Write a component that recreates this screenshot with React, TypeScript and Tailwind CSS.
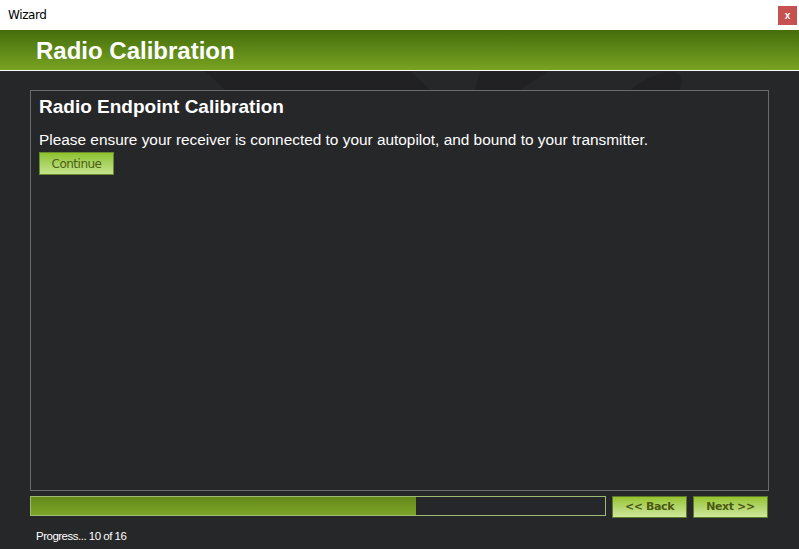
export default function App() {
  const done = 10;
  const total = 16;
  return (
    <div className="w-[799px] h-[549px] flex flex-col bg-[#262729] overflow-hidden font-['Liberation_Sans',Arial,sans-serif]">
      {/* Window title bar */}
      <div className="h-[30px] bg-white flex items-center justify-between pl-[8px] pr-[2px]">
        <span className="text-[12px] text-black font-['DejaVu_Sans',sans-serif] tracking-[-0.4px]">Wizard</span>
        <button className="w-[19px] h-[19px] mt-[1px] bg-[#c75050] text-white text-[10px] font-bold flex items-center justify-center">
          x
        </button>
      </div>

      {/* Green header */}
      <div className="h-[41px] bg-gradient-to-b from-[#456e0b] to-[#78a322] flex items-center pl-[36px] border-b border-white">
        <h1 className="text-[24px] font-bold text-white leading-none mt-[2px]">Radio Calibration</h1>
      </div>

      {/* Body */}
      <div className="relative flex-1 flex flex-col px-[30px] pt-[19px]">
        {/* faint watermark */}
        <svg className="absolute left-0 top-0" width="799" height="60" viewBox="0 0 799 60">
          <polygon points="205,0 410,0 430,19 225,19" fill="#202122" opacity="0.8" />
          <polygon points="480,0 548,0 520,19 475,19" fill="#202122" opacity="0.8" />
          <path d="M630 19 C 660 -5, 690 -5, 680 19 Z" fill="#202122" opacity="0.8" />
        </svg>

        <div className="relative h-[401px] border border-[#6b6b6b] pl-[8px] pt-[5px]">
          <h2 className="text-[19px] font-bold text-white leading-[22px]">Radio Endpoint Calibration</h2>
          <p className="mt-[13px] text-[15.4px] text-white leading-[18px]">
            Please ensure your receiver is connected to your autopilot, and bound to your transmitter.
          </p>
          <button className="mt-[3px] w-[75px] h-[23px] bg-gradient-to-b from-[#8dc22a] to-[#c6e38c] border border-[#6a8a30] text-[12px] text-[#4b5e12] font-['DejaVu_Sans',sans-serif] tracking-[-0.5px]">
            Continue
          </button>
        </div>

        <div className="relative flex items-start gap-[6px] mt-[5px]">
          <div className="w-[576px] h-[20px] border border-[#9dbc72] bg-[#26272a]">
            <div
              className="h-full bg-gradient-to-b from-[#66891b] to-[#7aa528]"
              style={{ width: `${(385 / 574) * 100 * (done / total) / (10 / 16)}%` }}
            />
          </div>
          <button className="w-[75px] h-[22px] bg-gradient-to-b from-[#96c42a] to-[#cfe79a] border border-[#5d7a2c] text-[11px] font-bold text-[#4a5a10] font-['DejaVu_Sans',sans-serif] tracking-[-0.4px]">
            &lt;&lt; Back
          </button>
          <button className="w-[75px] h-[22px] bg-gradient-to-b from-[#96c42a] to-[#cfe79a] border border-[#5d7a2c] text-[11px] font-bold text-[#4a5a10] font-['DejaVu_Sans',sans-serif] tracking-[-0.4px]">
            Next &gt;&gt;
          </button>
        </div>

        <div className="relative mt-[10px] pl-[6px] text-[11.5px] text-white tracking-[-0.5px]">
          Progress... {done} of {total}
        </div>
      </div>
    </div>
  );
}
